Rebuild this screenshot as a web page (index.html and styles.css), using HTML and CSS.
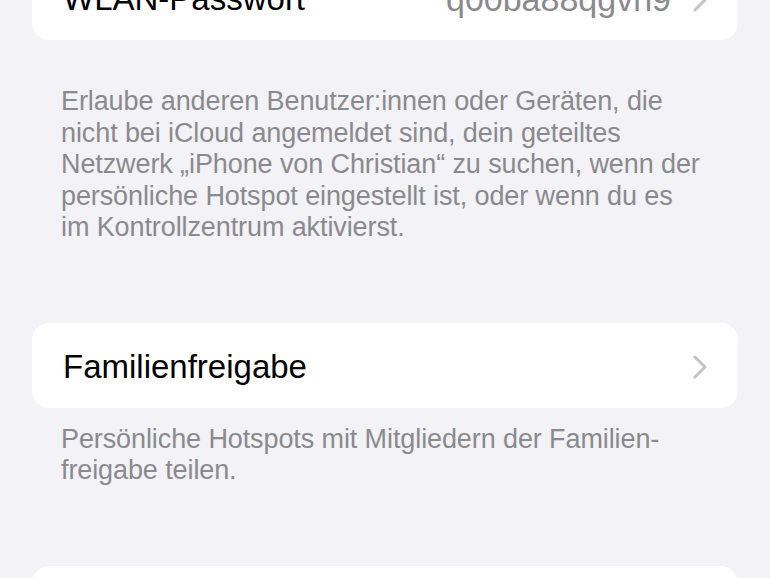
FILE: index.html
```html
<!DOCTYPE html>
<html lang="de">
<head>
    <meta charset="UTF-8">
    <title>Persönlicher Hotspot</title>
    <link rel="stylesheet" href="styles.css">
</head>
<body>
<div class="page">
    <!-- WLAN-Passwort -->
    <div class="group group-first">
        <div class="cell">
            <span class="cell-title">WLAN-Passwort</span>
            <span class="cell-value">q00ba88qgvh9</span>
            <svg class="chevron" width="14" height="24" viewBox="0 0 14 24"><path d="M2 2 L12 12 L2 22" fill="none" stroke="#c4c4c7" stroke-width="3" stroke-linecap="round" stroke-linejoin="round"/></svg>
        </div>
    </div>
    <p class="footnote footnote-first">Erlaube anderen Benutzer:innen oder Geräten, die<br>nicht bei iCloud angemeldet sind, dein geteiltes<br>Netzwerk „iPhone von Christian“ zu suchen, wenn der<br>persönliche Hotspot eingestellt ist, oder wenn du es<br>im Kontrollzentrum aktivierst.</p>

    <!-- Familienfreigabe -->
    <div class="group">
        <div class="cell">
            <span class="cell-title">Familienfreigabe</span>
            <svg class="chevron" width="14" height="24" viewBox="0 0 14 24"><path d="M2 2 L12 12 L2 22" fill="none" stroke="#c4c4c7" stroke-width="3" stroke-linecap="round" stroke-linejoin="round"/></svg>
        </div>
    </div>
    <p class="footnote">Persönliche Hotspots mit Mitgliedern der Familien-<br>freigabe teilen.</p>

    <div class="group">
        <div class="cell"></div>
    </div>
</div>
</body>
</html>
```

FILE: styles.css
```css
html, body {
    margin: 0;
    padding: 0;
    background: #f2f2f7;
    overflow: hidden;
}

body {
    font-family: "Liberation Sans", "Noto Sans", Arial, sans-serif;
    -webkit-font-smoothing: antialiased;
}

.page {
    padding: 0 32px;
}

/* weiße Gruppe */
.group {
    background: #ffffff;
    border-radius: 17px;
    margin-top: 79px;
}

.group-first {
    margin-top: -45px;
}

.cell {
    height: 85px;
    display: flex;
    align-items: center;
    padding: 0 31px;
    gap: 22px;
}

.cell-title {
    flex: 1;
    color: #000000;
    font-size: 33px;
    margin-top: 3px;
}

.cell-value {
    color: #8a8a8e;
    font-size: 34px;
    margin-top: 3px;
}

.chevron {
    flex: none;
    margin-top: 4px;
    margin-right: 0;
}

.footnote {
    margin: 16px 0 0 0;
    padding: 0 29px;
    color: #8a8a8e;
    font-size: 27px;
    line-height: 31.5px;
    letter-spacing: -0.1px;
}

.footnote-first {
    margin-top: 46px;
}
```
